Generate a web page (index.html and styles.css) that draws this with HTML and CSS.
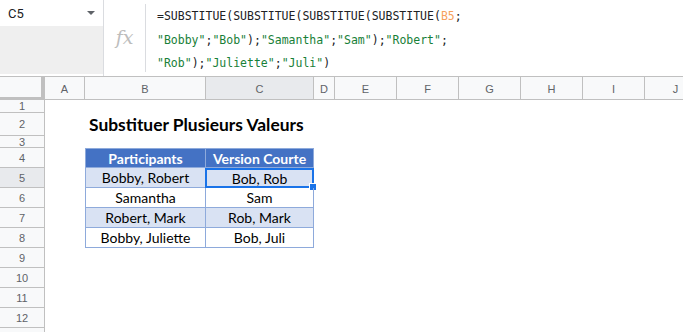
FILE: index.html
```html
<!DOCTYPE html>
<html lang="fr">
  <head>
    <meta charset="UTF-8" />
    <title>Substituer Plusieurs Valeurs</title>
    <link rel="stylesheet" href="styles.css">
  </head>
  <body>
    <div class="formula-bar">
      <div class="name-box">
        <div class="name-top">
          <span class="cell-ref">C5</span>
          <span class="arrow"></span>
        </div>
        <div class="name-fill"></div>
      </div>
      <div class="fx">fx</div>
      <div class="formula">
        <div>=SUBSTITUE(SUBSTITUE(SUBSTITUE(SUBSTITUE(<span class="ref">B5</span>;</div>
        <div><span class="str">"Bobby"</span>;<span class="str">"Bob"</span>);<span class="str">"Samantha"</span>;<span class="str">"Sam"</span>);<span class="str">"Robert"</span>;</div>
        <div><span class="str">"Rob"</span>);<span class="str">"Juliette"</span>;<span class="str">"Juli"</span>)</div>
      </div>
    </div>

    <div class="sheet">
      <div class="corner"></div>
      <div class="col-head">A</div>
      <div class="col-head">B</div>
      <div class="col-head active">C</div>
      <div class="col-head">D</div>
      <div class="col-head">E</div>
      <div class="col-head">F</div>
      <div class="col-head">G</div>
      <div class="col-head">H</div>
      <div class="col-head">I</div>
      <div class="col-head">J</div>

      <div class="row-head r1">1</div>
      <div class="row-head r2">2</div>
      <div class="row-head r3">3</div>
      <div class="row-head r4">4</div>
      <div class="row-head r5 active">5</div>
      <div class="row-head r6">6</div>
      <div class="row-head r7">7</div>
      <div class="row-head r8">8</div>
      <div class="row-head r9">9</div>
      <div class="row-head r10">10</div>
      <div class="row-head r11">11</div>
      <div class="row-head r12">12</div>
      <div class="row-head r13"></div>

      <div class="title">Substituer Plusieurs Valeurs</div>

      <div class="cell head first r4 cb">Participants</div>
      <div class="cell head r4 cc">Version Courte</div>

      <div class="cell first band r5 cb">Bobby, Robert</div>
      <div class="cell band r5 cc selected">Bob, Rob<span class="handle"></span></div>

      <div class="cell first r6 cb">Samantha</div>
      <div class="cell r6 cc">Sam</div>

      <div class="cell first band r7 cb">Robert, Mark</div>
      <div class="cell band r7 cc">Rob, Mark</div>

      <div class="cell first r8 cb">Bobby, Juliette</div>
      <div class="cell r8 cc">Bob, Juli</div>
    </div>
  </body>
</html>
```

FILE: styles.css
```css
body {
  margin: 0;
  background: #fff;
  font-family: Arial, "Liberation Sans", sans-serif;
  color: #202124;
  overflow: hidden;
}

/* formula bar */
.formula-bar {
  display: flex;
  height: 76px;
}
.name-box {
  width: 103px;
  display: flex;
  flex-direction: column;
  border-right: 1px solid #dadce0;
}
.name-top {
  height: 26px;
  display: flex;
  align-items: center;
  justify-content: space-between;
  padding: 0 8px 0 8px;
  box-sizing: border-box;
}
.cell-ref {
  font-family: Roboto, Arial, sans-serif;
  font-size: 13px;
  color: #202124;
}
.arrow {
  width: 0;
  height: 0;
  border-left: 4px solid transparent;
  border-right: 4px solid transparent;
  border-top: 4px solid #5f6368;
}
.name-fill {
  flex: 1;
  background: #efefef;
  margin-bottom: 2px;
}
.fx {
  width: 41px;
  display: flex;
  align-items: center;
  justify-content: center;
  font-family: "DejaVu Serif", "Liberation Serif", serif;
  font-style: italic;
  font-size: 19px;
  color: #bdbdbd;
  border-right: 1px solid #dadce0;
  margin: 4px 0;
  padding-bottom: 2px;
}
.formula {
  padding: 5px 0 0 11px;
  font-family: "DejaVu Sans Mono", monospace;
  font-size: 11.5px;
  line-height: 23.5px;
  color: #202124;
}
.formula .str {
  color: #188038;
}
.formula .ref {
  color: #f6a15c;
}

/* sheet grid */
.sheet {
  display: grid;
  grid-template-columns: 45px 40px 121px 108px 21px 62px 62px 62px 62px 62px 62px;
  grid-template-rows: 24px 13px 23px 12px 20px 20px 20px 20px 20px 20px 20px 20px 20px 20px;
  width: 700px;
}
.corner {
  background: #f8f9fa;
  border-right: 4px solid #c0c0c0;
  border-bottom: 3px solid #c0c0c0;
  border-top: 1px solid #c0c0c0;
}
.col-head,
.row-head {
  background: #f8f9fa;
  color: #5f6368;
  font-size: 11px;
  display: flex;
  align-items: center;
  justify-content: center;
  box-sizing: border-box;
  overflow: hidden;
  border-right: 1px solid #c0c0c0;
  border-bottom: 1px solid #c0c0c0;
}
.col-head {
  border-top: 1px solid #c0c0c0;
  padding-top: 1px;
}
.row-head {
  grid-column: 1;
}
.col-head.active,
.row-head.active {
  background: #e8eaed;
}
.r1 { grid-row: 2; }
.r2 { grid-row: 3; }
.r3 { grid-row: 4; }
.r4 { grid-row: 5; }
.r5 { grid-row: 6; }
.r6 { grid-row: 7; }
.r7 { grid-row: 8; }
.r8 { grid-row: 9; }
.r9 { grid-row: 10; }
.r10 { grid-row: 11; }
.r11 { grid-row: 12; }
.r12 { grid-row: 13; }
.r13 { grid-row: 14; }

.title {
  grid-row: 3;
  grid-column: 3 / 6;
  font-family: Lato, "Open Sans", sans-serif;
  font-weight: bold;
  font-size: 17.4px;
  color: #000;
  padding-left: 4px;
  display: flex;
  align-items: center;
}

/* data table */
.cb { grid-column: 3; }
.cc { grid-column: 4; }
.cell {
  position: relative;
  box-sizing: border-box;
  display: flex;
  align-items: center;
  justify-content: center;
  font-family: Lato, "Open Sans", sans-serif;
  font-size: 14px;
  color: #000;
  border-right: 1px solid #8eaadb;
  border-bottom: 1px solid #8eaadb;
}
.cell.first {
  border-left: 1px solid #8eaadb;
}
.cell.head {
  background: #4472c4;
  color: #fff;
  font-weight: bold;
  border-top: 1px solid #8eaadb;
}
.cell.band {
  background: #d9e2f3;
}
.cell.selected {
  border: 2px solid #1a73e8;
  margin-left: -1px;
}
.handle {
  position: absolute;
  right: -5px;
  bottom: -5px;
  width: 6px;
  height: 6px;
  background: #1a73e8;
  border: 1px solid #fff;
}
```
